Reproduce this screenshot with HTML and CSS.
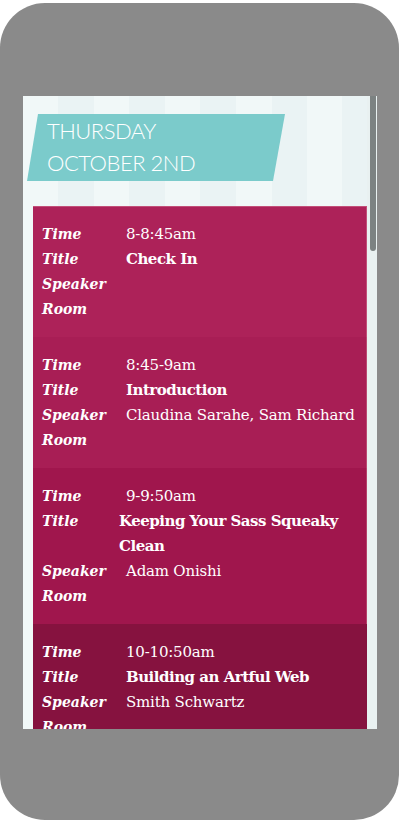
FILE: index.html
```html
<!DOCTYPE html>
<html lang="en">
<head>
<meta charset="utf-8">
<title>Schedule</title>
<link rel="stylesheet" href="styles.css">
</head>
<body>
<div class="phone">
  <div class="screen">
    <div class="content">
      <h1 class="day"><span>THURSDAY</span><span>OCTOBER 2ND</span></h1>
      <div class="sessions">
        <dl class="session s1">
          <dt>Time</dt><dd>8-8:45am</dd>
          <dt>Title</dt><dd class="title">Check In</dd>
          <dt>Speaker</dt><dd></dd>
          <dt>Room</dt><dd></dd>
        </dl>
        <dl class="session s2">
          <dt>Time</dt><dd>8:45-9am</dd>
          <dt>Title</dt><dd class="title">Introduction</dd>
          <dt>Speaker</dt><dd>Claudina Sarahe, Sam Richard</dd>
          <dt>Room</dt><dd></dd>
        </dl>
        <dl class="session s3">
          <dt>Time</dt><dd>9-9:50am</dd>
          <dt>Title</dt><dd class="title shifted">Keeping Your Sass Squeaky Clean</dd>
          <dt>Speaker</dt><dd>Adam Onishi</dd>
          <dt>Room</dt><dd></dd>
        </dl>
        <dl class="session s4">
          <dt>Time</dt><dd>10-10:50am</dd>
          <dt>Title</dt><dd class="title">Building an Artful Web</dd>
          <dt>Speaker</dt><dd>Smith Schwartz</dd>
          <dt>Room</dt><dd></dd>
        </dl>
      </div>
    </div>
    <div class="scrollbar"><div class="thumb"></div></div>
  </div>
</div>
</body>
</html>
```

FILE: styles.css
```css
html, body {
  margin: 0;
  padding: 0;
  background: #ffffff;
}

.phone {
  box-sizing: border-box;
  width: 399px;
  height: 817px;
  margin-top: 3px;
  padding: 93px 22px 0 23px;
  background: #8a8a8a;
  border-radius: 45px;
}

.screen {
  display: flex;
  height: 633px;
  width: 354px;
  overflow: hidden;
}

.content {
  flex: 1;
  overflow: hidden;
  background: repeating-linear-gradient(90deg, #f1f8f8 0, #f1f8f8 35.5px, #eaf3f4 35.5px, #eaf3f4 71px);
}

.day {
  box-sizing: border-box;
  display: flex;
  flex-direction: column;
  width: 258px;
  height: 67px;
  margin: 18px 0 0 4px;
  padding: 1px 0 0 20px;
  background: #7bcbcb;
  clip-path: polygon(11px 0, 100% 0, calc(100% - 12px) 100%, 0 100%);
  color: #ffffff;
  font-family: Lato, "Open Sans", sans-serif;
  font-weight: 300;
  font-size: 22px;
  line-height: 32px;
  letter-spacing: -0.5px;
}

.sessions {
  margin: 25px 0 0 10px;
}

.session {
  display: grid;
  grid-template-columns: 84px 1fr;
  margin: 0;
  padding: 16px 4px 15px 9px;
  color: #ffffff;
  line-height: 25px;
}

.s1 { background: #ad2259; box-shadow: inset 0 1px 0 #c25079, inset -1px 0 0 #c25079; }
.s2 { background: #a81e55; box-shadow: inset -1px 0 0 #bb4a72; }
.s3 { background: #a0164d; box-shadow: inset -1px 0 0 #b5416a; }
.s4 { background: #86123f; }

.session dt {
  font-family: "DejaVu Serif", serif;
  font-weight: bold;
  font-style: italic;
  font-size: 14px;
}

.session dd {
  margin: 0;
  font-family: "DejaVu Serif", serif;
  font-size: 15px;
  letter-spacing: -0.2px;
}

.session dd.title {
  font-weight: bold;
  letter-spacing: -0.5px;
}

.session dd.shifted {
  margin-left: -7px;
}

.scrollbar {
  width: 10px;
  flex: none;
  background: #e9f1f1;
}

.thumb {
  width: 6px;
  height: 155px;
  margin-left: 3px;
  background: #7c8282;
  border-radius: 0 0 3px 3px;
}
```
